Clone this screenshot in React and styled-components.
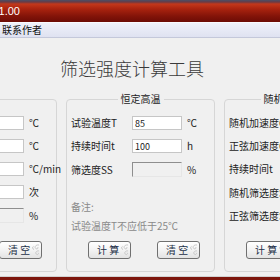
import React from 'react';
import styled, { createGlobalStyle } from 'styled-components';

const GlobalStyle = createGlobalStyle`
  html, body {
    margin: 0;
    padding: 0;
    background: #f0f0f0;
    overflow: hidden;
  }
  body {
    font-family: "Noto Sans CJK SC", "Noto Sans", sans-serif;
  }
`;

const groups = [
  {
    title: '温循',
    labelWidth: 56,
    rows: [
      { label: '高温温度TH', unit: '℃' },
      { label: '低温温度TL', unit: '℃' },
      { label: '温变速率V', unit: '℃/min' },
      { label: '循环次数N', unit: '次' },
      { label: '筛选度SS', unit: '%', readOnly: true },
    ],
  },
  {
    title: '恒定高温',
    labelWidth: 56,
    rows: [
      { label: '试验温度T', unit: '℃', value: '85' },
      { label: '持续时间t', unit: 'h', value: '100' },
      { label: '筛选度SS', unit: '%', readOnly: true },
    ],
    notes: ['备注:', '试验温度T不应低于25℃'],
  },
  {
    title: '随机与正弦振动',
    labelWidth: 80,
    rows: [
      { label: '随机加速度Grms', unit: 'g' },
      { label: '正弦加速度G', unit: 'g' },
      { label: '持续时间t', unit: 'min' },
      { label: '随机筛选度SS', unit: '%', readOnly: true },
      { label: '正弦筛选度SS', unit: '%', readOnly: true },
    ],
  },
];

const Curl = () => (
  <CurlSvg viewBox="0 0 12 14">
    <path d="M11 1.5 C7 1 5.5 4 7.5 5.5 C9 6.5 10.5 5 9.5 3.8" />
    <path d="M11 8 C8 7.5 6.5 10 8 11.5 C9.5 12.8 11 11 10 10" />
    <path d="M5 3 C3.5 3.5 3.5 6 5.5 6.5" />
  </CurlSvg>
);

const App = () => {
  return (
    <Viewport>
      <GlobalStyle />
      <Window>
        <TitleBar>
          <Caption>筛选强度计算工具 V1.00</Caption>
        </TitleBar>
        <MenuBar>
          <MenuItem>联系作者</MenuItem>
        </MenuBar>
        <Body>
          <Heading>筛选强度计算工具</Heading>
          <Groups>
            {groups.map(group => (
              <Group key={group.title}>
                <Legend>{group.title}</Legend>
                {group.rows.map(row => (
                  <Row key={row.label} $label={group.labelWidth}>
                    <Label>{row.label}</Label>
                    {row.readOnly ? (
                      <Sunken readOnly defaultValue="" />
                    ) : (
                      <Field defaultValue={row.value || ''} />
                    )}
                    <Unit>{row.unit}</Unit>
                  </Row>
                ))}
                {group.notes && (
                  <Notes>
                    {group.notes.map(n => (
                      <NoteLine key={n}>{n}</NoteLine>
                    ))}
                  </Notes>
                )}
                <ButtonRow>
                  <Button>
                    计 算
                    <Curl />
                  </Button>
                  <Button>
                    清 空
                    <Curl />
                  </Button>
                </ButtonRow>
              </Group>
            ))}
          </Groups>
        </Body>
        <BottomEdge />
      </Window>
    </Viewport>
  );
};

const Viewport = styled.div`
  width: 280px;
  height: 280px;
  overflow: hidden;
`;

const Window = styled.div`
  width: 480px;
  height: 280px;
  margin-left: -100px;
  display: flex;
  flex-direction: column;
`;

const TitleBar = styled.div`
  flex: none;
  height: 22px;
  display: flex;
  align-items: center;
  background: linear-gradient(
    to bottom,
    #4a5068 0,
    #6a3a44 2px,
    #c2381c 4px,
    #a9230f 9px,
    #831409 16px,
    #6c0c06 22px
  );
`;

const Caption = styled.div`
  width: 120px;
  display: flex;
  justify-content: flex-end;
  white-space: nowrap;
  color: #fff;
  font-family: "Liberation Sans", sans-serif;
  font-size: 11px;
  padding-top: 1px;
`;

const MenuBar = styled.div`
  flex: none;
  height: 14px;
  display: flex;
  align-items: center;
  padding-left: 102px;
  border-top: 1px solid #fafaff;
  border-bottom: 1px solid #c4c8da;
  background: linear-gradient(#eff1fa, #dfe2f1);
`;

const MenuItem = styled.span`
  font-size: 10px;
  line-height: 14px;
  color: #111;
`;

const Body = styled.div`
  flex: 1;
  display: flex;
  flex-direction: column;
  padding-left: 8px;
  background: #f0f0f0;
`;

const Heading = styled.h1`
  margin: 18px 0 0;
  padding-right: 24px;
  font-size: 18px;
  line-height: 24px;
  font-weight: 300;
  text-align: center;
  color: #3a3a3a;
`;

const Groups = styled.div`
  display: flex;
  gap: 9px;
  margin-top: 19px;
  align-items: flex-start;
`;

const Group = styled.div`
  position: relative;
  flex: none;
  width: 149px;
  height: 173px;
  box-sizing: border-box;
  border: 1px solid #d6d6d6;
  border-radius: 4px;
  padding: 16px 4px 12px 4px;
  display: flex;
  flex-direction: column;
`;

const Legend = styled.div`
  position: absolute;
  top: -7px;
  left: 0;
  right: 0;
  margin: 0 auto;
  width: fit-content;
  padding: 0 3px;
  background: #f0f0f0;
  font-size: 10px;
  line-height: 12px;
  color: #222;
  white-space: nowrap;
`;

const Row = styled.div`
  display: grid;
  grid-template-columns: ${p => p.$label}px 50px auto;
  column-gap: 5px;
  align-items: center;
  height: 14px;
  margin-bottom: 9px;
`;

const Label = styled.span`
  font-size: 10px;
  line-height: 14px;
  color: #222;
  white-space: nowrap;
`;

const Field = styled.input`
  box-sizing: border-box;
  width: 50px;
  height: 14px;
  margin: 0;
  padding: 0 2px;
  border: 1px solid #c6c6c6;
  background: #fff;
  font-family: "Noto Sans CJK SC", "Noto Sans", sans-serif;
  font-size: 9px;
  line-height: 12px;
  color: #222;
  outline: none;
`;

const Sunken = styled(Field)`
  height: 15px;
  border-color: #8e8e8e #e6e6e6 #e6e6e6 #8e8e8e;
  background: #f0f0f0;
`;

const Unit = styled.span`
  font-size: 10px;
  line-height: 14px;
  color: #222;
  white-space: nowrap;
`;

const Notes = styled.div`
  margin-top: 15px;
  color: #8a8a8a;
  font-size: 10px;
`;

const NoteLine = styled.div`
  line-height: 14px;
  margin-bottom: 5px;
  white-space: nowrap;
`;

const ButtonRow = styled.div`
  margin-top: auto;
  display: flex;
  gap: 26px;
  padding-left: 17px;
`;

const Button = styled.button`
  position: relative;
  width: 43px;
  height: 18px;
  box-sizing: border-box;
  margin: 0;
  padding: 0 0 0 8px;
  text-align: left;
  border: 1px solid #707070;
  border-radius: 3px;
  background: linear-gradient(#ffffff, #f3f3f3 50%, #e3e3e3);
  font-family: "Noto Sans CJK SC", "Noto Sans", sans-serif;
  font-size: 10px;
  line-height: 16px;
  color: #243048;
  white-space: pre;
`;

const CurlSvg = styled.svg`
  position: absolute;
  top: 1px;
  right: 1px;
  width: 11px;
  height: 14px;
  fill: none;
  stroke: #c4c4c4;
  stroke-width: 1;
`;

const BottomEdge = styled.div`
  flex: none;
  height: 3px;
  border-top: 1px solid #d2d2d2;
  background: #7d160c;
`;

export default App;
